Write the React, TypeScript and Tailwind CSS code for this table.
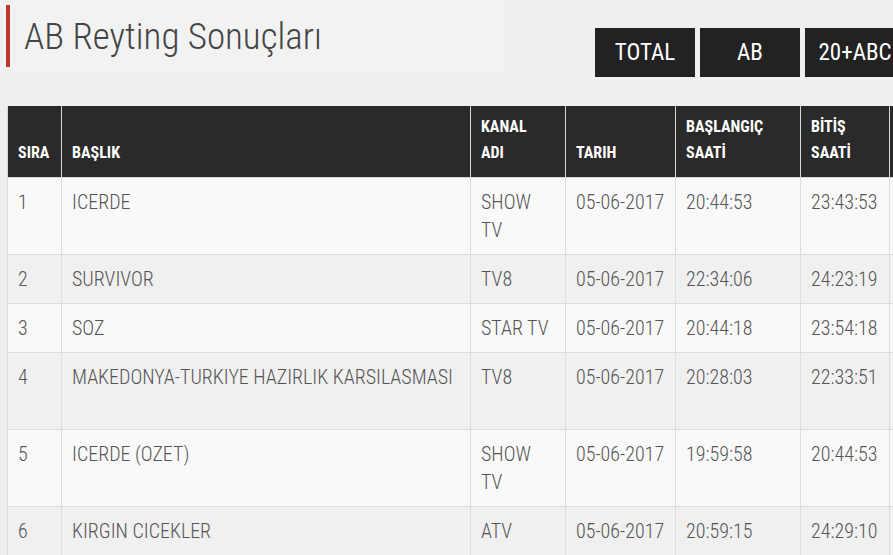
import React from "react";

const F = { fontFamily: '"Roboto Condensed", "Roboto", sans-serif' };

type Row = { n: string; t: string; k: string; d: string; s: string; e: string; h: string };

const rows: Row[] = [
  { n: "1", t: "ICERDE", k: "SHOW TV", d: "05-06-2017", s: "20:44:53", e: "23:43:53", h: "h-[77px]" },
  { n: "2", t: "SURVIVOR", k: "TV8", d: "05-06-2017", s: "22:34:06", e: "24:23:19", h: "h-[49px]" },
  { n: "3", t: "SOZ", k: "STAR TV", d: "05-06-2017", s: "20:44:18", e: "23:54:18", h: "h-[49px]" },
  { n: "4", t: "MAKEDONYA-TURKIYE HAZIRLIK KARSILASMASI", k: "TV8", d: "05-06-2017", s: "20:28:03", e: "22:33:51", h: "h-[77px]" },
  { n: "5", t: "ICERDE (OZET)", k: "SHOW TV", d: "05-06-2017", s: "19:59:58", e: "20:44:53", h: "h-[77px]" },
  { n: "6", t: "KIRGIN CICEKLER", k: "ATV", d: "05-06-2017", s: "20:59:15", e: "24:29:10", h: "h-[49px]" },
];

export default function App() {
  return (
    <div className="w-[893px] h-[555px] overflow-hidden bg-[#efefef] font-stretch-condensed" style={F}>
      <div className="flex items-start">
        <div className="w-[505px] h-[72px] shrink-0 bg-[#f2f2f2] flex items-start pt-[5px] pl-[6px]">
          <div className="w-[4px] h-[62px] bg-[#c0392b]" />
          <div className="ml-[14px] mt-[10px] text-[37px] leading-[44px] font-light text-[#444] whitespace-nowrap">AB Reyting Sonuçları</div>
        </div>
        <div className="flex gap-[5px] ml-[90px] mt-[28px] shrink-0">
          {["TOTAL", "AB", "20+ABC"].map((b) => (
            <div key={b} className="w-[100px] h-[49px] bg-[#222] text-white text-[23px] flex items-center justify-center shrink-0 pt-[2px]">
              {b}
            </div>
          ))}
        </div>
      </div>
      <div className="ml-[7px] mt-[29px] w-[950px]">
        <table className="border-collapse table-fixed w-[950px] text-[20px] font-light text-[#555]">
          <colgroup>
            <col className="w-[54px]" />
            <col className="w-[409px]" />
            <col className="w-[95px]" />
            <col className="w-[110px]" />
            <col className="w-[125px]" />
            <col className="w-[89px]" />
            <col className="w-[68px]" />
          </colgroup>
          <thead>
            <tr className="h-[71px] bg-[#2a2a2a] text-white text-[16px] leading-[26px]">
              {["SIRA", "BAŞLIK", "KANAL ADI", "TARIH", "BAŞLANGIÇ SAATİ", "BİTİŞ SAATİ", ""].map((h, i) => (
                <th key={i} className="align-bottom text-left px-[10px] pb-[11px] border-x border-[#d8d8d8] font-bold">
                  {h.split(" ").map((w, j) => (
                    <div key={j}>{w}</div>
                  ))}
                </th>
              ))}
            </tr>
          </thead>
          <tbody>
            {rows.map((r, i) => (
              <tr key={r.n} className={`${r.h} ${i % 2 === 0 ? "bg-[#f9f9f9]" : "bg-[#f0f0f0]"}`}>
                {[r.n, r.t, r.k, r.d, r.s, r.e, ""].map((c, j) => (
                  <td key={j} className="align-top px-[10px] pt-[10px] leading-[28px] border border-[#dcdcdc] whitespace-nowrap">
                    {j === 2 && c === "SHOW TV" ? (
                      <>
                        <div>SHOW</div>
                        <div>TV</div>
                      </>
                    ) : (
                      c
                    )}
                  </td>
                ))}
              </tr>
            ))}
          </tbody>
        </table>
      </div>
    </div>
  );
}
